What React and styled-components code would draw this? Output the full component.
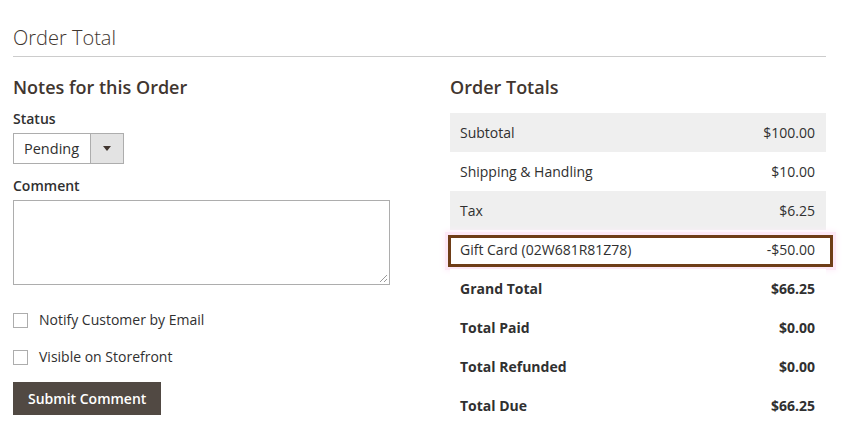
import styled, { createGlobalStyle } from 'styled-components';

const GlobalStyle = createGlobalStyle`
  body {
    margin: 0;
    background: #fff;
    font-family: 'Open Sans', 'Liberation Sans', sans-serif;
    color: #303030;
  }
`;

const totals = [
  { label: 'Subtotal', value: '$100.00', shaded: true },
  { label: 'Shipping & Handling', value: '$10.00' },
  { label: 'Tax', value: '$6.25', shaded: true },
  { label: 'Gift Card (02W681R81Z78)', value: '-$50.00', marked: true },
  { label: 'Grand Total', value: '$66.25', strong: true },
  { label: 'Total Paid', value: '$0.00', strong: true },
  { label: 'Total Refunded', value: '$0.00', strong: true },
  { label: 'Total Due', value: '$66.25', strong: true },
];

export default function App() {
  return (
    <Page>
      <GlobalStyle />
      <SectionTitle>Order Total</SectionTitle>
      <Columns>
        <Col>
          <BlockTitle>Notes for this Order</BlockTitle>
          <FieldLabel $top={8}>Status</FieldLabel>
          <Select>
            <SelectValue>Pending</SelectValue>
            <SelectArrow>
              <svg width="8" height="5" viewBox="0 0 8 5">
                <path d="M0 0h8L4 5z" fill="#41362f" />
              </svg>
            </SelectArrow>
          </Select>
          <FieldLabel $top={12}>Comment</FieldLabel>
          <TextArea />
          <CheckRow $top={25}>
            <Box />
            Notify Customer by Email
          </CheckRow>
          <CheckRow $top={17}>
            <Box />
            Visible on Storefront
          </CheckRow>
          <SubmitButton>Submit Comment</SubmitButton>
        </Col>
        <Col>
          <BlockTitle>Order Totals</BlockTitle>
          <Table>
            {totals.map((t) => (
              <Row key={t.label} $shaded={t.shaded} $strong={t.strong} $marked={t.marked}>
                <span>{t.label}</span>
                <span>{t.value}</span>
              </Row>
            ))}
          </Table>
        </Col>
      </Columns>
    </Page>
  );
}

const Page = styled.div`
  width: 813px;
  padding: 24px 0 0 13px;
`;

const SectionTitle = styled.h2`
  margin: 0;
  font-size: 20px;
  font-weight: 300;
  color: #41362f;
  line-height: 28px;
  padding-bottom: 4px;
  border-bottom: 1px solid #cccccc;
`;

const Columns = styled.div`
  display: grid;
  grid-template-columns: 376px 376px;
  column-gap: 61px;
  padding-top: 16px;
`;

const Col = styled.div`
  display: flex;
  flex-direction: column;
  align-items: flex-start;
`;

const BlockTitle = styled.h3`
  margin: 0;
  font-size: 18px;
  font-weight: 600;
  color: #41362f;
  line-height: 28px;
`;

const FieldLabel = styled.div`
  margin-top: ${(p) => p.$top}px;
  font-size: 14px;
  font-weight: 600;
  color: #303030;
  line-height: 20px;
`;

const Select = styled.div`
  display: flex;
  margin-top: 4px;
  height: 31px;
  border: 1px solid #adadad;
  box-sizing: border-box;
  width: 111px;
`;

const SelectValue = styled.div`
  flex: 1;
  display: flex;
  align-items: center;
  padding-left: 10px;
  font-size: 14.5px;
  color: #303030;
  border-right: 1px solid #adadad;
`;

const SelectArrow = styled.div`
  width: 32px;
  display: flex;
  align-items: center;
  justify-content: center;
  background: #e3e3e3;
`;

const TextArea = styled.div`
  margin-top: 4px;
  width: 377px;
  height: 85px;
  box-sizing: border-box;
  border: 1px solid #adadad;
  position: relative;

  &::after {
    content: '';
    position: absolute;
    right: 2px;
    bottom: 2px;
    width: 7px;
    height: 7px;
    background: linear-gradient(
      135deg,
      transparent 45%,
      #9a9a9a 45%,
      #9a9a9a 55%,
      transparent 55%,
      transparent 75%,
      #9a9a9a 75%,
      #9a9a9a 85%,
      transparent 85%
    );
  }
`;

const CheckRow = styled.label`
  display: flex;
  align-items: center;
  gap: 11px;
  margin-top: ${(p) => p.$top}px;
  font-size: 14px;
  color: #303030;
  line-height: 20px;
`;

const Box = styled.span`
  width: 15px;
  height: 15px;
  box-sizing: border-box;
  border: 1px solid #adadad;
  background: #fff;
`;

const SubmitButton = styled.button`
  margin-top: 15px;
  height: 33px;
  padding: 0 15px;
  border: none;
  background: #514943;
  color: #fff;
  font-family: 'Open Sans', 'Liberation Sans', sans-serif;
  font-size: 14px;
  font-weight: 600;
`;

const Table = styled.div`
  margin-top: 12px;
  width: 376px;
  display: flex;
  flex-direction: column;
`;

const Row = styled.div`
  position: relative;
  display: flex;
  justify-content: space-between;
  align-items: center;
  height: 39px;
  padding: 0 11px 0 10px;
  font-size: 14px;
  font-weight: ${(p) => (p.$strong ? 700 : 400)};
  color: #303030;
  background: ${(p) => (p.$shaded ? '#efefef' : '#fff')};

  ${(p) =>
    p.$marked &&
    `
    &::after {
      content: '';
      position: absolute;
      top: 5px;
      bottom: 2px;
      left: -2px;
      right: -7px;
      border: 3px solid #6e3d17;
      box-shadow: 0 0 0 3px #fde8f6, 0 0 6px 4px #fdf0fa;
      pointer-events: none;
    }
  `}
`;
